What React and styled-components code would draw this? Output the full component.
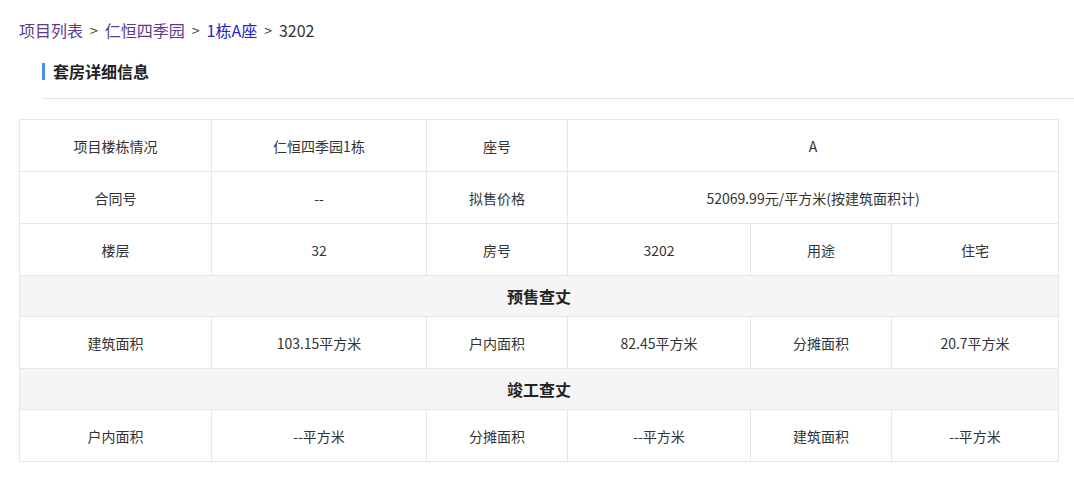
import React from "react";
import styled, { createGlobalStyle } from "styled-components";

const GlobalStyle = createGlobalStyle`
  html, body {
    margin: 0;
    padding: 0;
    background: #fff;
    font-family: "Noto Sans CJK SC", "Liberation Sans", sans-serif;
    color: #333;
  }
`;

const Page = styled.div`
  width: 1074px;
  padding: 18px 0 0 0;
`;

const Crumbs = styled.div`
  display: flex;
  align-items: center;
  gap: 7px;
  padding-left: 19px;
  font-size: 16px;
  line-height: 24px;
`;

const Crumb = styled.a`
  color: ${(p) => (p.$visited ? "#5b3a8c" : "#2323c8")};
  text-decoration: none;
`;

const Sep = styled.span`
  color: #333;
  font-size: 14px;
`;

const Current = styled.span`
  color: #333;
`;

const TitleBar = styled.div`
  margin: 17px 0 0 42px;
  padding-bottom: 15px;
  border-bottom: 1px solid #e4e4e4;
`;

const Title = styled.h2`
  margin: 0;
  display: flex;
  align-items: center;
  gap: 8px;
  font-size: 16px;
  font-weight: bold;
  color: #222;
  line-height: 24px;

  &::before {
    content: "";
    width: 3px;
    height: 17px;
    background: #4a90e2;
  }
`;

const Table = styled.table`
  margin: 20px 0 0 19px;
  width: 1039px;
  table-layout: fixed;
  border-collapse: collapse;
  font-size: 14px;
  color: #333;
`;

const Cell = styled.td`
  height: 51px;
  border: 1px solid #e6e6e6;
  text-align: center;
  padding: 0;
`;

const Section = styled.td`
  height: 40px;
  border: 1px solid #e6e6e6;
  background: #f5f5f5;
  text-align: center;
  font-size: 16px;
  font-weight: bold;
  color: #222;
  padding: 0;
`;

const widths = [192, 215, 141, 183, 141, 167];

export default function App() {
  return (
    <Page>
      <GlobalStyle />
      <Crumbs>
        <Crumb $visited href="#">项目列表</Crumb>
        <Sep>&gt;</Sep>
        <Crumb $visited href="#">仁恒四季园</Crumb>
        <Sep>&gt;</Sep>
        <Crumb href="#">1栋A座</Crumb>
        <Sep>&gt;</Sep>
        <Current>3202</Current>
      </Crumbs>
      <TitleBar>
        <Title>套房详细信息</Title>
      </TitleBar>
      <Table>
        <colgroup>
          {widths.map((w, i) => (
            <col key={i} style={{ width: w }} />
          ))}
        </colgroup>
        <tbody>
          <tr>
            <Cell>项目楼栋情况</Cell>
            <Cell>仁恒四季园1栋</Cell>
            <Cell>座号</Cell>
            <Cell colSpan={3}>A</Cell>
          </tr>
          <tr>
            <Cell>合同号</Cell>
            <Cell>--</Cell>
            <Cell>拟售价格</Cell>
            <Cell colSpan={3}>52069.99元/平方米(按建筑面积计)</Cell>
          </tr>
          <tr>
            <Cell>楼层</Cell>
            <Cell>32</Cell>
            <Cell>房号</Cell>
            <Cell>3202</Cell>
            <Cell>用途</Cell>
            <Cell>住宅</Cell>
          </tr>
          <tr>
            <Section colSpan={6}>预售查丈</Section>
          </tr>
          <tr>
            <Cell>建筑面积</Cell>
            <Cell>103.15平方米</Cell>
            <Cell>户内面积</Cell>
            <Cell>82.45平方米</Cell>
            <Cell>分摊面积</Cell>
            <Cell>20.7平方米</Cell>
          </tr>
          <tr>
            <Section colSpan={6}>竣工查丈</Section>
          </tr>
          <tr>
            <Cell>户内面积</Cell>
            <Cell>--平方米</Cell>
            <Cell>分摊面积</Cell>
            <Cell>--平方米</Cell>
            <Cell>建筑面积</Cell>
            <Cell>--平方米</Cell>
          </tr>
        </tbody>
      </Table>
    </Page>
  );
}
